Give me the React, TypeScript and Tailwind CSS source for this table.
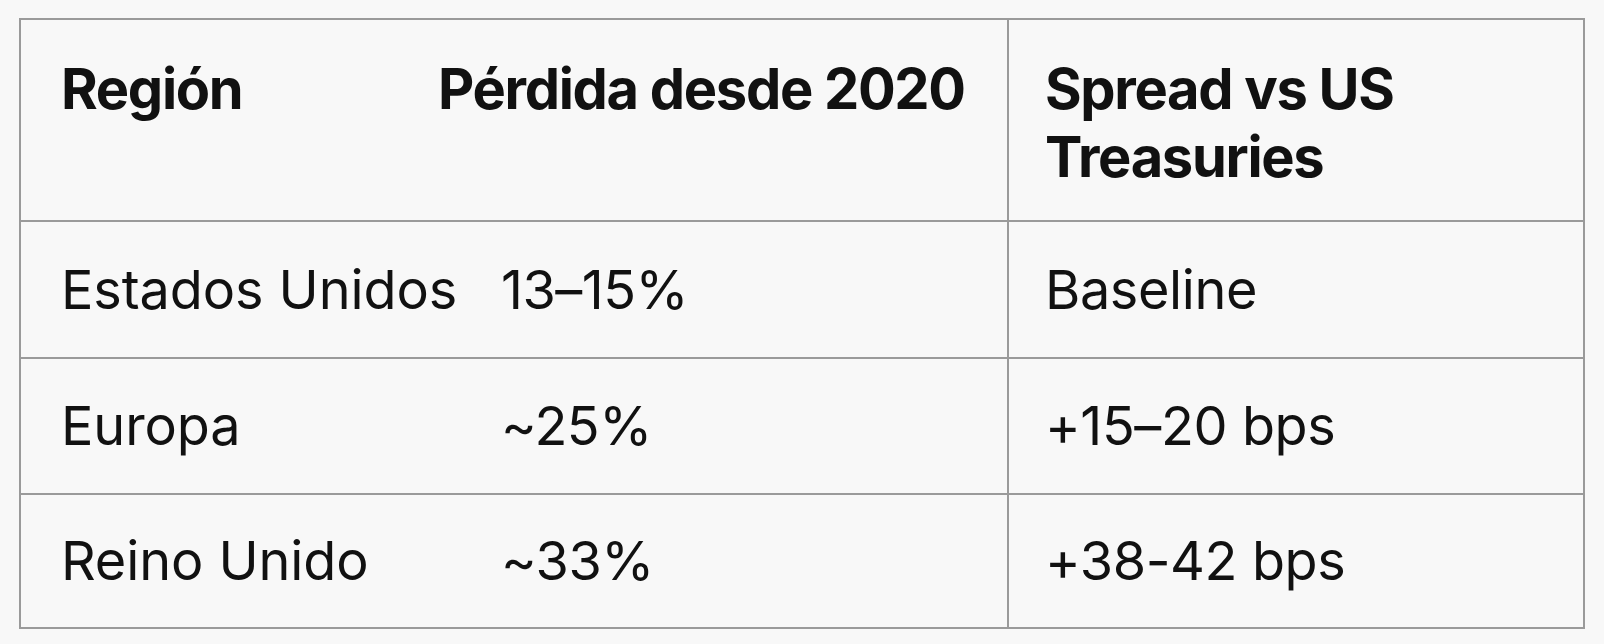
const rows = [
  { region: "Estados Unidos", loss: "13–15%", spread: "Baseline", h: "h-[137px]" },
  { region: "Europa", loss: "~25%", spread: "+15–20 bps", h: "h-[136px]" },
  { region: "Reino Unido", loss: "~33%", spread: "+38-42 bps", h: "h-[132px]" },
];

export default function App() {
  return (
    <div className="min-h-screen w-full bg-[#f8f8f8] pt-[18px] pl-[19px] font-['Inter',sans-serif] text-[#111]">
      <div className="w-[1566px] border-2 border-[#9a9a9a]">
        {/* header */}
        <div className="grid h-[202px] grid-cols-[986px_1fr] border-b-2 border-[#9a9a9a] text-[56px] font-bold leading-[68px] tracking-[-1.3px]">
          <div className="grid grid-cols-[417px_1fr] pt-[35px]">
            <div className="pl-[40px]">Región</div>
            <div>Pérdida desde 2020</div>
          </div>
          <div className="border-l-2 border-[#9a9a9a] pl-[36px] pr-[40px] pt-[35px]">
            Spread vs US Treasuries
          </div>
        </div>

        {rows.map((r, i) => (
          <div
            key={r.region}
            className={`grid grid-cols-[986px_1fr] text-[54px] leading-[64px] ${r.h} ${
              i < rows.length - 1 ? "border-b-2 border-[#9a9a9a]" : ""
            }`}
          >
            <div className="grid grid-cols-[480px_1fr] items-center">
              <div className="pl-[40px] whitespace-nowrap tracking-[-0.1px]">{r.region}</div>
              <div className="tracking-[-0.5px]">{r.loss}</div>
            </div>
            <div className="flex items-center border-l-2 border-[#9a9a9a] pl-[36px] tracking-[-0.4px]">
              {r.spread}
            </div>
          </div>
        ))}
      </div>
    </div>
  );
}
